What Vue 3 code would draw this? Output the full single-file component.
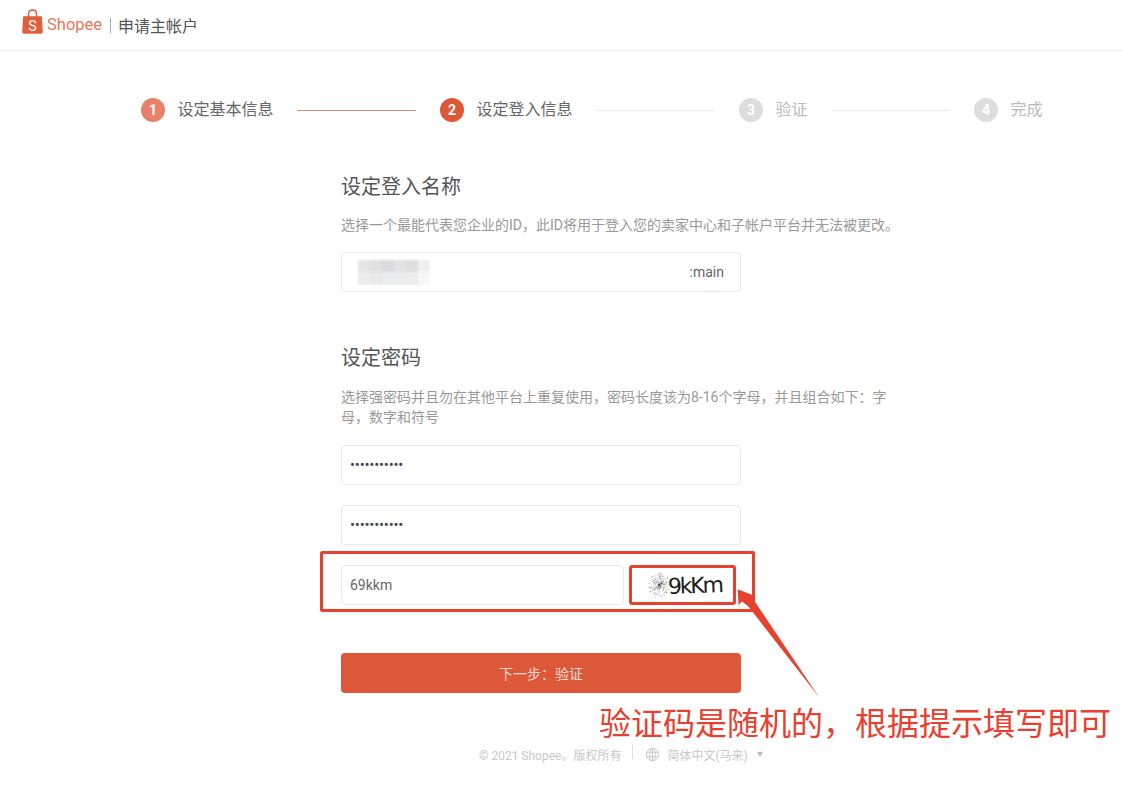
<script setup>
const steps = [
  { n: 1, label: '设定基本信息', state: 'done' },
  { n: 2, label: '设定登入信息', state: 'active' },
  { n: 3, label: '验证', state: 'todo' },
  { n: 4, label: '完成', state: 'todo' },
]

const blurCells = [
  '#e4e4e4', '#e0e0e0', '#d8dbe0', '#e2e2e2', '#dedede', '#efefef',
  '#ebebeb', '#e9e9e9', '#eaecf0', '#ebebeb', '#ececec', '#f7f7f7',
]

let seed = 17
const rnd = () => {
  seed = (seed * 16807) % 2147483647
  return seed / 2147483647
}
const noise = Array.from({ length: 260 }, () => {
  const a = rnd() * Math.PI * 2
  const r = Math.pow(rnd(), 1.1) * 13
  return {
    x: (13 + Math.cos(a) * r * 0.8).toFixed(1),
    y: (15 + Math.sin(a) * r).toFixed(1),
    o: (0.2 + rnd() * 0.5).toFixed(2),
  }
})
</script>

<template>
  <div class="page">
    <header class="topbar">
      <svg class="bag" viewBox="0 0 22 26" aria-hidden="true">
        <path class="bag-body" d="M1.2 7.5h19.6l1 16.2a2 2 0 0 1-2 2.1H2.2a2 2 0 0 1-2-2.1z" />
        <path class="bag-handle" d="M6.8 8.5V5.4C6.8 2.8 8.6 1 11 1s4.2 1.8 4.2 4.4v3.1" />
        <text x="11" y="22.5" class="bag-s">S</text>
      </svg>
      <span class="brand">Shopee</span>
      <span class="bar-sep"></span>
      <span class="bar-title">申请主帐户</span>
    </header>

    <nav class="stepper">
      <template v-for="(s, i) in steps" :key="s.n">
        <div class="step" :class="s.state">
          <span class="dot">{{ s.n }}</span>
          <span class="step-label">{{ s.label }}</span>
        </div>
        <span v-if="i < steps.length - 1" class="link" :class="{ on: i === 0 }"></span>
      </template>
    </nav>

    <main class="form">
      <h2 class="heading">设定登入名称</h2>
      <p class="hint one">选择一个最能代表您企业的ID，此ID将用于登入您的卖家中心和子帐户平台并无法被更改。</p>
      <div class="field name-field">
        <div class="smudge">
          <i v-for="(c, i) in blurCells" :key="i" :style="{ background: c }"></i>
        </div>
        <span class="suffix">:main</span>
      </div>

      <h2 class="heading second">设定密码</h2>
      <p class="hint two">选择强密码并且勿在其他平台上重复使用，密码长度该为8-16个字母，并且组合如下：字母，数字和符号</p>
      <div class="field secret">•••••••••••</div>
      <div class="field secret gap">•••••••••••</div>

      <div class="captcha-row">
        <div class="mark-box"></div>
        <div class="field captcha-input">69kkm</div>
        <div class="captcha-img">
          <svg class="speckle" viewBox="0 0 26 30" aria-hidden="true">
            <circle v-for="(p, i) in noise" :key="i" :cx="p.x" :cy="p.y" r="0.5" fill="#555" :opacity="p.o" />
          </svg>
          <span class="captcha-text">9kKm</span>
        </div>
      </div>

      <button class="next" type="button">下一步：验证</button>
    </main>

    <svg class="arrow" viewBox="0 0 1122 791" aria-hidden="true">
      <polygon points="737.7,589.3 752.5,595 753,599 819.5,697.7 748,606 742,601.5 738.5,605" />
    </svg>
    <div class="note">验证码是随机的，根据提示填写即可</div>

    <footer class="foot">
      <span>© 2021 Shopee。版权所有</span>
      <span class="foot-sep"></span>
      <svg class="globe" viewBox="0 0 16 16" aria-hidden="true">
        <circle cx="8" cy="8" r="6.6" />
        <ellipse cx="8" cy="8" rx="3" ry="6.6" />
        <path d="M1.6 5.6h12.8M1.6 10.4h12.8M8 1.4v13.2" />
      </svg>
      <span>简体中文(马来)</span>
      <span class="caret"></span>
    </footer>
  </div>
</template>

<style scoped>
.page {
  position: relative;
  width: 1122px;
  height: 791px;
  overflow: hidden;
  background: #fff;
  font-family: Roboto, "Noto Sans CJK SC", sans-serif;
  color: #333;
}
.topbar {
  display: flex;
  align-items: center;
  height: 51px;
  padding-left: 22px;
  box-sizing: border-box;
  border-bottom: 1px solid #f1f1f1;
}
.bag { width: 21px; height: 25px; margin-top: -7px; }
.bag-body { fill: #e0603c; }
.bag-handle { fill: none; stroke: #e0603c; stroke-width: 1.6; }
.bag-s {
  fill: #fff;
  font-size: 15px;
  text-anchor: middle;
  font-family: Roboto, sans-serif;
}
.brand {
  margin-left: 4px;
  font-size: 16.5px;
  line-height: 24px;
  color: #e8775a;
  width: 56px;
}
.bar-sep {
  width: 1px;
  height: 15px;
  margin: 0 8px 0 7px;
  background: #aaa;
}
.bar-title { font-size: 16px; color: #555; margin-top: -1px; margin-left: -1px; }

.stepper {
  display: flex;
  align-items: center;
  height: 24px;
  margin-top: 47px;
  padding-left: 141px;
}
.step { display: flex; align-items: center; }
.dot {
  width: 24px;
  height: 24px;
  border-radius: 50%;
  margin-right: 12.5px;
  color: #fff;
  font-size: 14px;
  font-weight: 700;
  line-height: 24px;
  text-align: center;
}
.step-label { font-size: 16px; line-height: 24px; }
.done .dot { background: #e6816a; }
.active .dot { background: #dc5838; }
.done .step-label, .active .step-label { color: #666; }
.todo .dot { background: #ddd; }
.todo .step-label { color: #bbb; }
.link {
  width: 119px;
  height: 1px;
  margin: 0 23.75px;
  background: #ececec;
}
.link.on { background: #e68a73; }

.form {
  width: 400px;
  margin: 0 0 0 341px;
}
.heading {
  margin: 51px 0 0;
  font-size: 20px;
  font-weight: 400;
  line-height: 28px;
  color: #555;
}
.heading.second { margin-top: 52px; }
.hint {
  width: 552px;
  margin: 14px 0 0;
  font-size: 14px;
  line-height: 20px;
  color: #999;
  white-space: normal;
}
.hint.one { white-space: nowrap; }
.hint.two { width: 548px; margin-top: 15px; }
.field {
  display: flex;
  align-items: center;
  height: 40px;
  box-sizing: border-box;
  padding: 0 8px;
  border: 1px solid #e8e8e8;
  border-radius: 4px;
  background: #fff;
  font-size: 14px;
  color: #666;
}
.name-field {
  margin-top: 17px;
  justify-content: space-between;
  padding-left: 16px;
  padding-right: 16px;
}
.smudge {
  display: grid;
  grid-template-columns: repeat(6, 12px);
  grid-template-rows: 12px 13px;
  filter: blur(1px);
}
.smudge i { display: block; }
.suffix { color: #666; }
.secret { margin-top: 17px; font-size: 15px; color: #445; letter-spacing: -0.23px; }
.hint.two + .secret { margin-top: 18px; }
.secret.gap { margin-top: 20px; }

.captcha-row {
  position: relative;
  display: flex;
  gap: 5px;
  margin-top: 20px;
  height: 40px;
}
.mark-box {
  position: absolute;
  left: -21px;
  top: -14px;
  width: 435px;
  height: 61px;
  box-sizing: border-box;
  border: 3px solid #e8402f;
  border-radius: 2px;
}
.captcha-input { width: 283px; flex: none; }
.captcha-img {
  display: flex;
  align-items: center;
  width: 107px;
  height: 40px;
  flex: none;
  box-sizing: border-box;
  border: 3px solid #e8402f;
  border-radius: 3px;
  padding-left: 14px;
  background: #fff;
}
.speckle { width: 26px; height: 30px; flex: none; }
.captcha-text {
  margin-left: -4px;
  font-family: "DejaVu Sans", sans-serif;
  font-size: 22px;
  letter-spacing: -2.2px;
  color: #1d1d1d;
  transform: rotate(-2deg);
}
.next {
  display: block;
  width: 400px;
  height: 40px;
  margin-top: 48px;
  border: 0;
  border-radius: 4px;
  background: #dc5838;
  color: #f8dcd3;
  font-family: inherit;
  font-size: 14px;
}

.arrow {
  position: absolute;
  inset: 0;
  width: 1122px;
  height: 791px;
  pointer-events: none;
}
.arrow polygon { fill: #e8402f; }
.note {
  position: absolute;
  left: 599px;
  top: 702px;
  font-size: 32px;
  line-height: 44px;
  color: #e8402f;
  white-space: nowrap;
}

.foot {
  display: flex;
  align-items: center;
  height: 20px;
  margin-top: 51px;
  padding-left: 479px;
  font-size: 12px;
  color: #c8c8c8;
}
.foot-sep {
  width: 1px;
  height: 14px;
  margin: -4px 12px 0 11px;
  background: #ddd;
}
.globe {
  width: 15px;
  height: 15px;
  margin-right: 7px;
  fill: none;
  stroke: #c8c8c8;
  stroke-width: 1;
}
.caret {
  width: 0;
  height: 0;
  margin-left: 9px;
  border-style: solid;
  border-width: 5px 3.5px 0;
  border-color: #bbb transparent transparent;
}
</style>
